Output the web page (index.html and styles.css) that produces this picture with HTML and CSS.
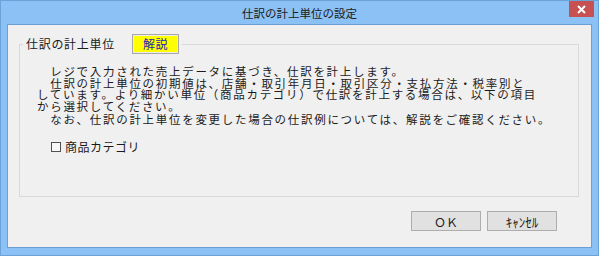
FILE: index.html
```html
<!DOCTYPE html>
<html lang="ja">
<head>
<meta charset="utf-8">
<title>仕訳の計上単位の設定</title>
<link rel="stylesheet" href="styles.css">
</head>
<body>
<div class="window">
  <div class="titlebar">
    <span class="spacer"></span>
    <span class="title">仕訳の計上単位の設定</span>
    <span class="close-wrap"><span class="close">
      <svg width="9" height="9" viewBox="0 0 9 9"><path d="M1 1 L8 8 M8 1 L1 8" stroke="#fff" stroke-width="2" fill="none"/></svg>
    </span></span>
  </div>
  <div class="client">
    <fieldset class="group">
      <legend class="legend"><span class="legend-text">仕訳の計上単位</span><span class="help-btn">解説</span></legend>
      <div class="group-body">
        <div class="line">　レジで入力された売上データに基づき、仕訳を計上します。</div>
        <div class="line">　仕訳の計上単位の初期値は、店舗・取引年月日・取引区分・支払方法・税率別と</div>
        <div class="line">しています。より細かい単位（商品カテゴリ）で仕訳を計上する場合は、以下の項目</div>
        <div class="line">から選択してください。</div>
        <div class="line line-gap">　なお、仕訳の計上単位を変更した場合の仕訳例については、解説をご確認ください。</div>
        <div class="check-row"><span class="check-box"></span><span class="check-label">商品カテゴリ</span></div>
      </div>
    </fieldset>
    <div class="buttons">
      <span class="btn">ＯＫ</span>
      <span class="btn btn-cancel">ｷｬﾝｾﾙ</span>
    </div>
  </div>
</div>
</body>
</html>
```
FILE: styles.css
```css
html, body {
  margin: 0;
  padding: 0;
  background: #8bc1f4;
}
body {
  font-family: "Noto Sans CJK JP", "Noto Sans", sans-serif;
  color: #1b1b1b;
}
.window {
  width: 599px;
  height: 256px;
  box-sizing: border-box;
  border: 1px solid #6aa3da;
  background: #8bc1f4;
  display: flex;
  flex-direction: column;
}
.titlebar {
  height: 23px;
  flex: none;
  display: grid;
  grid-template-columns: 1fr auto 1fr;
  align-items: center;
}
.title {
  font-size: 11.5px;
  line-height: 23px;
  color: #202020;
  padding-top: 1px;
}
.close-wrap {
  justify-self: end;
  align-self: start;
  padding-right: 4px;
}
.close {
  width: 25px;
  height: 16px;
  background: #c75050;
  display: flex;
  align-items: center;
  justify-content: center;
}
.close svg { display: block; }
.client {
  flex: 1;
  margin: 0 6px 7px 6px;
  border: 1px solid #6d9fd4;
  background: #f0f0f0;
  display: flex;
  flex-direction: column;
}
.group {
  margin: 9px 12px 0 11px;
  padding: 0 0 0 17px;
  border: 1px solid #d9d9d9;
  min-width: 0;
}
.legend {
  margin-left: -14px;
  padding: 0 3px;
  line-height: 20px;
  height: 20px;
  display: flex;
  align-items: center;
}
.legend-text {
  font-size: 12px;
  letter-spacing: 0.7px;
  margin-right: 17px;
}
.help-btn {
  width: 47px;
  height: 20px;
  box-sizing: border-box;
  border: 1px solid #a8a8a8;
  box-shadow: inset 0 0 0 1px #ececec;
  background: #ffff00;
  color: #1f22b8;
  font-size: 12px;
  letter-spacing: 0.5px;
  display: flex;
  align-items: center;
  justify-content: center;
}
.group-body {
  padding-top: 12px;
  height: 130px;
  font-size: 11.5px;
}
.line {
  white-space: nowrap;
  line-height: 11.5px;
  letter-spacing: 1.7px;
}
.line-gap {
  margin-top: 2px;
}
.check-row {
  margin-top: 15px;
  padding-left: 14px;
  display: flex;
  align-items: center;
  line-height: 12px;
  font-size: 12px;
}
.check-box {
  width: 10px;
  height: 10px;
  box-sizing: border-box;
  border: 1px solid #505050;
  background: #f8f8f8;
  margin-right: 4px;
}
.check-label {
  letter-spacing: 0.5px;
}
.buttons {
  margin-top: 14px;
  margin-right: 34px;
  display: flex;
  justify-content: flex-end;
  gap: 6px;
}
.btn {
  width: 70px;
  height: 20px;
  box-sizing: border-box;
  border: 1px solid #adadad;
  background: #e1e1e1;
  font-size: 12px;
  color: #1b1b1b;
  display: flex;
  align-items: center;
  justify-content: center;
}
.btn-cancel {
  font-size: 13px;
}
```
